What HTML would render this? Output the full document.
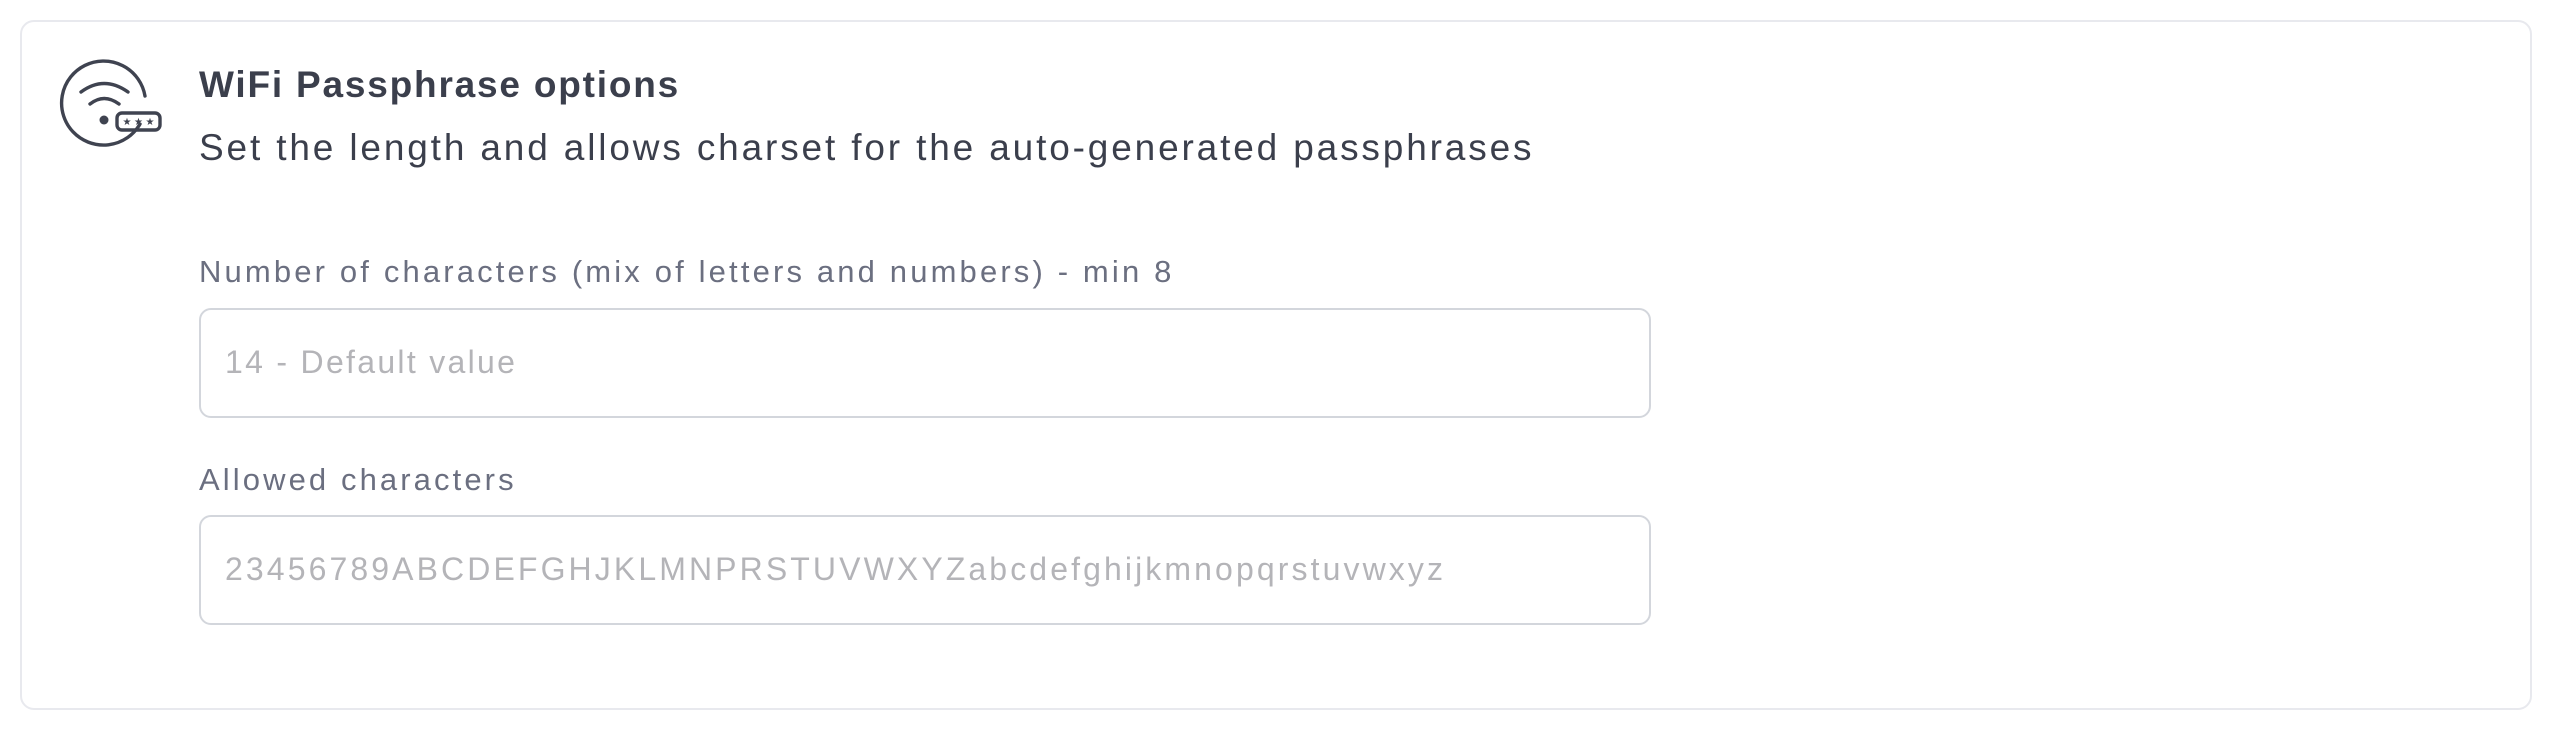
<!DOCTYPE html>
<html><head><meta charset="utf-8"><style>
html,body{margin:0;padding:0;background:#fff;width:2556px;height:740px;overflow:hidden;font-family:"Liberation Sans",sans-serif;}
.card{position:absolute;left:20px;top:20px;width:2512px;height:690px;border:2px solid #e8e9ee;border-radius:14px;box-sizing:border-box;}
.t{position:absolute;white-space:nowrap;}
.input{position:absolute;left:199px;width:1452px;height:110px;border:2px solid #d3d6dc;border-radius:12px;box-sizing:border-box;}
</style></head><body>
<div class="card"></div>
<svg style="position:absolute;left:0;top:0" width="200" height="200" viewBox="0 0 200 200">
<g fill="none" stroke="#3f4350" stroke-width="3.4" stroke-linecap="round">
<path d="M140 124 A42 42 0 1 1 145 96"/>
<path d="M81 92 Q104 75 128 92"/>
<path d="M90 104 Q104 93 119 104"/>
<rect x="117" y="113" width="43" height="17" rx="5"/>
</g>
<circle cx="104" cy="120" r="4.5" fill="#3f4350"/>
<g fill="#3f4350" font-size="10" font-family="DejaVu Sans" text-anchor="middle">
<text x="127" y="125">★</text><text x="138.5" y="125">★</text><text x="150" y="125">★</text>
</g>
</svg>
<div class="t" style="left:199px;top:64px;font-size:37px;font-weight:bold;color:#3b3f4c;letter-spacing:1.8px;">WiFi Passphrase options</div>
<div class="t" style="left:199px;top:127px;font-size:37px;color:#3b3f4c;letter-spacing:2.85px;">Set the length and allows charset for the auto-generated passphrases</div>
<div class="t" style="left:199px;top:254px;font-size:31px;color:#6b6f80;letter-spacing:3.15px;">Number of characters (mix of letters and numbers) - min 8</div>
<div class="input" style="top:308px;"></div>
<div class="t" style="left:225px;top:344px;font-size:32px;color:#b4b4b8;letter-spacing:2.3px;">14 - Default value</div>
<div class="t" style="left:199px;top:462px;font-size:31px;color:#6b6f80;letter-spacing:3.1px;">Allowed characters</div>
<div class="input" style="top:515px;"></div>
<div class="t" style="left:225px;top:551px;font-size:32px;color:#b4b4b8;letter-spacing:3.1px;">23456789ABCDEFGHJKLMNPRSTUVWXYZabcdefghijkmnopqrstuvwxyz</div>
</body></html>
